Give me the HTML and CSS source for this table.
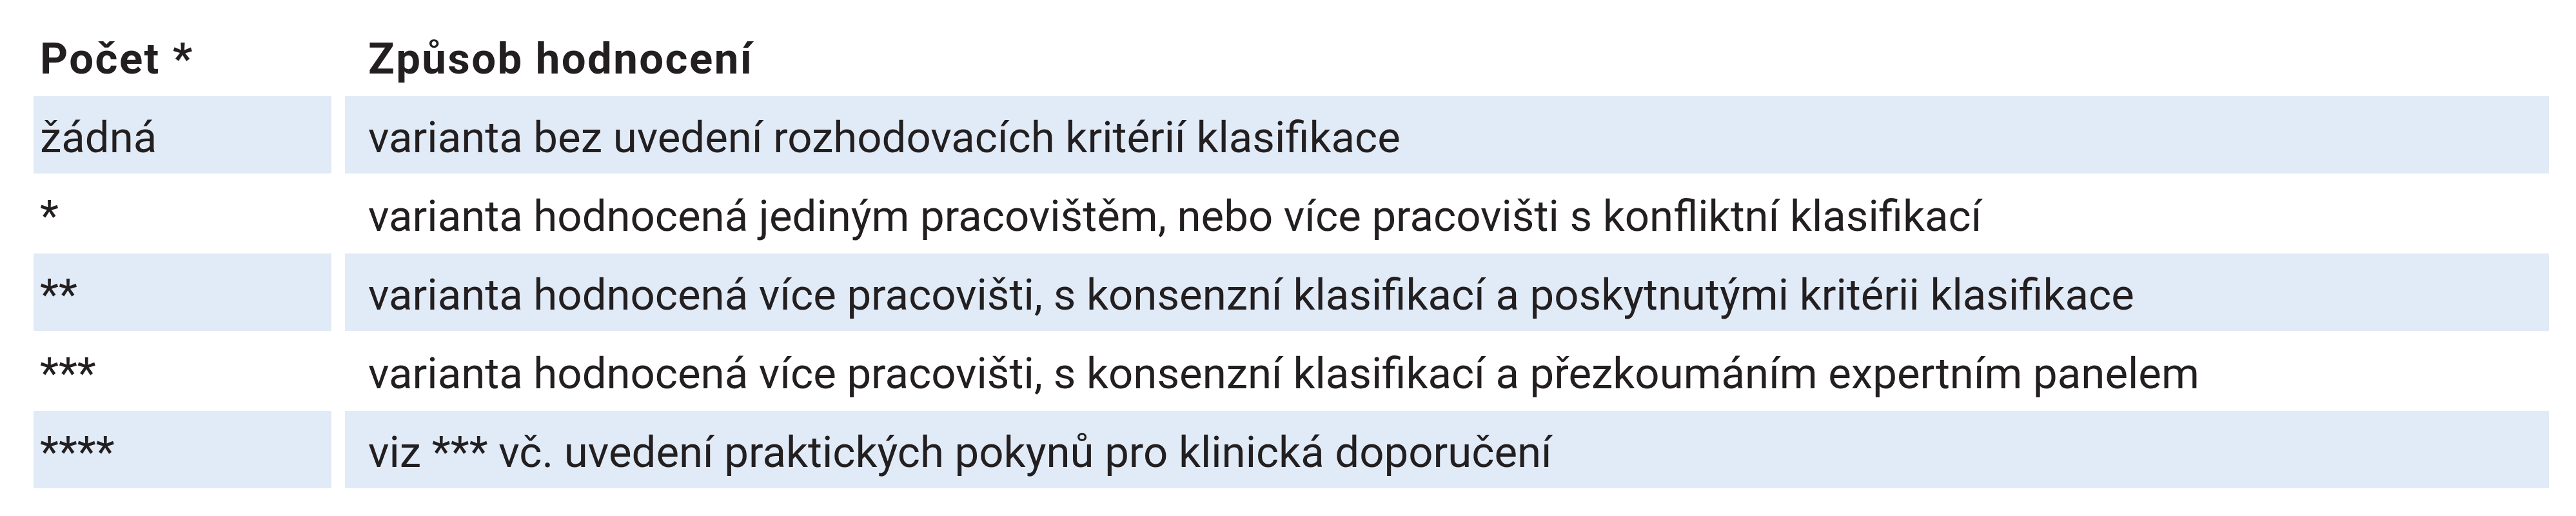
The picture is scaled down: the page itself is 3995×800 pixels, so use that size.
FILE: index.html
```html
<!DOCTYPE html>
<html lang="cs">
<head>
<meta charset="utf-8">
<title>Způsob hodnocení</title>
<link rel="stylesheet" href="styles.css">
</head>
<body>
<table class="rating">
  <thead>
    <tr>
      <th class="c-count">Počet *</th>
      <th class="c-desc">Způsob hodnocení</th>
    </tr>
  </thead>
  <tbody>
    <tr class="band">
      <td class="c-count">žádná</td>
      <td class="c-desc">varianta bez uvedení rozhodovacích kritérií klasifikace</td>
    </tr>
    <tr>
      <td class="c-count">*</td>
      <td class="c-desc">varianta hodnocená jediným pracovištěm, nebo více pracovišti s konfliktní klasifikací</td>
    </tr>
    <tr class="band">
      <td class="c-count">**</td>
      <td class="c-desc">varianta hodnocená více pracovišti, s konsenzní klasifikací a poskytnutými kritérii klasifikace</td>
    </tr>
    <tr>
      <td class="c-count">***</td>
      <td class="c-desc">varianta hodnocená více pracovišti, s konsenzní klasifikací a přezkoumáním expertním panelem</td>
    </tr>
    <tr class="band">
      <td class="c-count">****</td>
      <td class="c-desc">viz *** vč. uvedení praktických pokynů pro klinická doporučení</td>
    </tr>
  </tbody>
</table>
</body>
</html>
```
FILE: styles.css
```css
html, body {
  margin: 0;
  padding: 0;
  background: #ffffff;
}

.rating {
  border-collapse: separate;
  border-spacing: 21px 2.5px;
  margin: 25px 0 0 31px;
  width: 3943px;
  table-layout: fixed;
  font-family: Roboto, "Liberation Sans", sans-serif;
  font-size: 67.15px;
  color: #231f20;
}

.rating th,
.rating td {
  text-align: left;
  vertical-align: top;
  white-space: nowrap;
  padding: 9px 0 0 0;
  line-height: 111px;
}

.rating th {
  font-weight: 700;
  letter-spacing: 2.4px;
}

.rating td {
  font-weight: 400;
}

.c-count {
  width: 452px;
  padding-left: 10px !important;
}

.c-desc {
  width: 3382px;
  padding-left: 36px !important;
}

.band td {
  background: #e1ebf7;
}
```
